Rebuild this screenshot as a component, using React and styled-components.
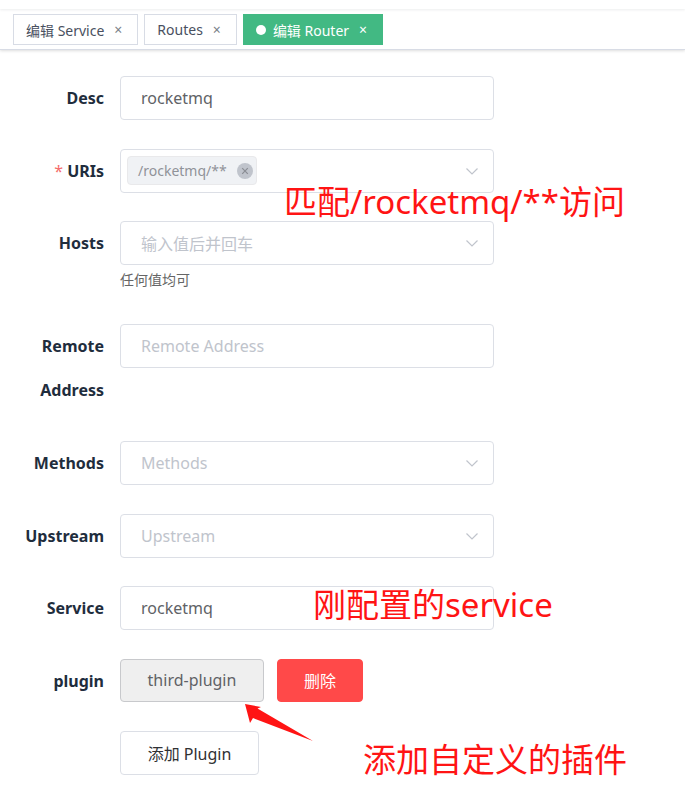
import React from "react";
import styled, { createGlobalStyle } from "styled-components";

const Global = createGlobalStyle`
  html, body { margin: 0; padding: 0; background: #fff; }
  body {
    font-family: "Noto Sans", "Noto Sans CJK SC", sans-serif;
    -webkit-font-smoothing: antialiased;
  }
  * { box-sizing: border-box; }
`;

const Page = styled.div`
  position: relative;
  width: 685px;
  height: 788px;
  overflow: hidden;
  background: #fff;
`;

const TopStrip = styled.div`
  height: 9px;
  background: #fff;
  box-shadow: 0 1px 3px rgba(0, 21, 41, 0.08);
  position: relative;
  z-index: 1;
`;

const TagsBar = styled.div`
  height: 41px;
  background: #fff;
  border-bottom: 1px solid #d8dce5;
  box-shadow: 0 1px 3px 0 rgba(0, 0, 0, 0.12), 0 0 3px 0 rgba(0, 0, 0, 0.04);
  display: flex;
  align-items: flex-start;
  gap: 6px;
  padding: 5px 0 0 13px;
`;

const Tag = styled.div`
  height: 31px;
  display: flex;
  align-items: center;
  padding: 0 15px 0 12px;
  border: 1px solid ${(p) => (p.$active ? "#42b983" : "#d8dce5")};
  background: ${(p) => (p.$active ? "#42b983" : "#fff")};
  color: ${(p) => (p.$active ? "#fff" : "#495060")};
  font-size: 14px;
  white-space: nowrap;
`;

const Dot = styled.span`
  width: 10px;
  height: 10px;
  border-radius: 50%;
  background: #fff;
  margin-right: 7px;
`;

const Close = styled.span`
  font-size: 14px;
  margin-left: 10px;
  color: ${(p) => (p.$active ? "#fff" : "#7a7f88")};
`;

const Form = styled.div`
  padding-top: 26px;
  display: flex;
  flex-direction: column;
`;

const Item = styled.div`
  display: flex;
  align-items: flex-start;
  margin-bottom: 28.5px;
`;

const Label = styled.div`
  width: 104px;
  margin-right: 16px;
  text-align: right;
  font-weight: 700;
  font-size: 16px;
  line-height: ${(p) => (p.$wrap ? "44.5px" : "44px")};
  color: #1f2d3d;
  flex-shrink: 0;
`;

const Star = styled.span`
  color: #f56c6c;
  margin-right: 4px;
  font-weight: 400;
`;

const Content = styled.div`
  width: 374px;
  display: flex;
  flex-direction: column;
`;

const Box = styled.div`
  height: 44px;
  border: 1px solid #dcdfe6;
  border-radius: 4px;
  display: flex;
  align-items: center;
  padding: 0 ${(p) => (p.$tags ? "20px 0 6px" : "20px")};
  font-size: 16px;
  color: ${(p) => (p.$placeholder ? "#c0c4cc" : "#606266")};
  background: #fff;
`;

const BoxText = styled.span`
  flex: 1;
  white-space: nowrap;
`;

const Chevron = styled.svg`
  width: 14px;
  height: 14px;
  flex-shrink: 0;
  margin-right: -6px;
`;

const Chip = styled.div`
  height: 29px;
  display: flex;
  align-items: center;
  padding: 0 3px 0 10px;
  background: #f0f2f5;
  border: 1px solid #e9e9eb;
  border-radius: 4px;
  color: #909399;
  font-size: 14px;
`;

const ChipClose = styled.span`
  width: 16px;
  height: 16px;
  border-radius: 50%;
  background: #c0c4cc;
  margin-left: 10px;
  display: flex;
  align-items: center;
  justify-content: center;
`;

const Spacer = styled.div`
  flex: 1;
`;

const Help = styled.div`
  font-size: 14px;
  line-height: 30px;
  color: #666;
`;

const ButtonRow = styled.div`
  display: flex;
  gap: 13px;
`;

const Button = styled.div`
  height: ${(p) => (p.$h ? p.$h : "43px")};
  width: ${(p) => p.$w};
  display: flex;
  align-items: center;
  justify-content: center;
  border-radius: 4px;
  font-size: 16px;
  border: 1px solid
    ${(p) =>
      p.$variant === "danger" ? "#ff4949" : p.$variant === "gray" ? "#c8c9cc" : "#dcdfe6"};
  background: ${(p) =>
    p.$variant === "danger" ? "#ff4949" : p.$variant === "gray" ? "#efefef" : "#fff"};
  color: ${(p) =>
    p.$variant === "danger" ? "#fff" : p.$variant === "gray" ? "#606266" : "#303133"};
`;

const Note = styled.div`
  position: absolute;
  left: ${(p) => p.$x}px;
  top: ${(p) => p.$y}px;
  font-size: 33px;
  line-height: 40px;
  color: #ff1414;
  white-space: nowrap;
`;

const Arrow = styled.svg`
  position: absolute;
  left: 240px;
  top: 698px;
  width: 80px;
  height: 50px;
`;

const ChevronIcon = () => (
  <Chevron viewBox="0 0 14 14">
    <path d="M1.5 4.5 L7 10 L12.5 4.5" fill="none" stroke="#c0c4cc" strokeWidth="1.2" />
  </Chevron>
);

export default function App() {
  return (
    <>
      <Global />
      <Page>
        <TopStrip />
        <TagsBar>
          <Tag>
            编辑 Service<Close>×</Close>
          </Tag>
          <Tag>
            Routes<Close>×</Close>
          </Tag>
          <Tag $active>
            <Dot />
            编辑 Router<Close $active>×</Close>
          </Tag>
        </TagsBar>

        <Form>
          <Item>
            <Label>Desc</Label>
            <Content>
              <Box>
                <BoxText>rocketmq</BoxText>
              </Box>
            </Content>
          </Item>

          <Item>
            <Label>
              <Star>*</Star>URIs
            </Label>
            <Content>
              <Box $tags>
                <Chip>
                  /rocketmq/**
                  <ChipClose>
                    <svg width="8" height="8" viewBox="0 0 8 8">
                      <path d="M1.2 1.2 L6.8 6.8 M6.8 1.2 L1.2 6.8" stroke="#8a8d94" strokeWidth="1.2" />
                    </svg>
                  </ChipClose>
                </Chip>
                <Spacer />
                <ChevronIcon />
              </Box>
            </Content>
          </Item>

          <Item>
            <Label>Hosts</Label>
            <Content>
              <Box $placeholder>
                <BoxText>输入值后并回车</BoxText>
                <ChevronIcon />
              </Box>
              <Help>任何值均可</Help>
            </Content>
          </Item>

          <Item>
            <Label $wrap>Remote Address</Label>
            <Content>
              <Box $placeholder>
                <BoxText>Remote Address</BoxText>
              </Box>
            </Content>
          </Item>

          <Item>
            <Label>Methods</Label>
            <Content>
              <Box $placeholder>
                <BoxText>Methods</BoxText>
                <ChevronIcon />
              </Box>
            </Content>
          </Item>

          <Item>
            <Label>Upstream</Label>
            <Content>
              <Box $placeholder>
                <BoxText>Upstream</BoxText>
                <ChevronIcon />
              </Box>
            </Content>
          </Item>

          <Item>
            <Label>Service</Label>
            <Content>
              <Box>
                <BoxText>rocketmq</BoxText>
                <ChevronIcon />
              </Box>
            </Content>
          </Item>

          <Item>
            <Label>plugin</Label>
            <Content>
              <ButtonRow>
                <Button $variant="gray" $w="144px">
                  third-plugin
                </Button>
                <Button $variant="danger" $w="86px">
                  删除
                </Button>
              </ButtonRow>
            </Content>
          </Item>

          <Item>
            <Label />
            <Content>
              <ButtonRow>
                <Button $w="139px" $h="44px">
                  添加 Plugin
                </Button>
              </ButtonRow>
            </Content>
          </Item>
        </Form>

        <Note $x={284} $y={182}>匹配/rocketmq/**访问</Note>
        <Note $x={313} $y={585}>刚配置的service</Note>
        <Note $x={363} $y={740}>添加自定义的插件</Note>

        <Arrow viewBox="0 0 80 50">
          <polygon points="5,6 21,9 17.5,10.5 73,43 13,20 10,25" fill="#ff1414" />
        </Arrow>
      </Page>
    </>
  );
}
